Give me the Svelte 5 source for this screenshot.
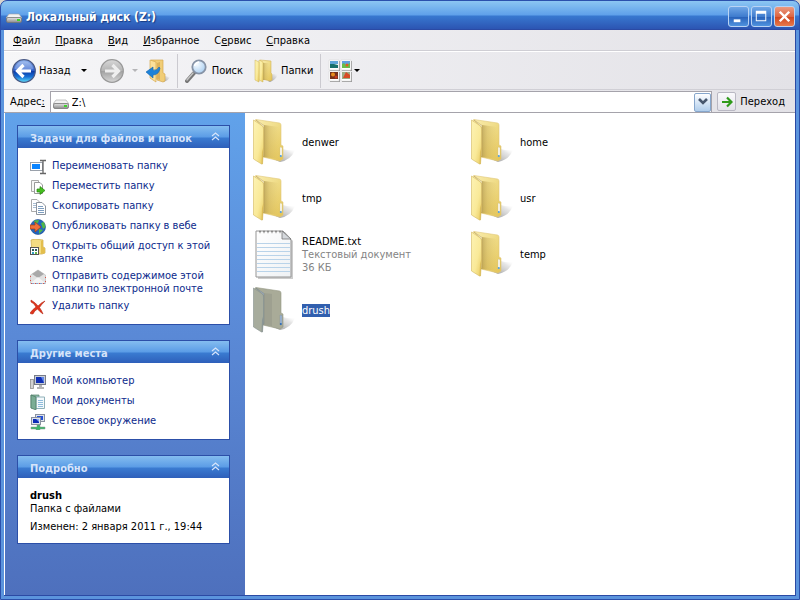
<script>
	let address = 'Z:\\';
	let selected = 'drush';
	let closed = {};

	const menu = [
		['', 'Ф', 'айл'],
		['', 'П', 'равка'],
		['', 'В', 'ид'],
		['', 'И', 'збранное'],
		['С', 'е', 'рвис'],
		['', 'С', 'правка']
	];

	const panels = [
		{
			title: 'Задачи для файлов и папок',
			links: [
				{ icon: 'rename', text: 'Переименовать папку' },
				{ icon: 'move', text: 'Переместить папку' },
				{ icon: 'copy', text: 'Скопировать папку' },
				{ icon: 'globe', text: 'Опубликовать папку в вебе' },
				{ icon: 'share', text: 'Открыть общий доступ к этой папке' },
				{ icon: 'mail', text: 'Отправить содержимое этой папки по электронной почте' },
				{ icon: 'delete', text: 'Удалить папку' }
			]
		},
		{
			title: 'Другие места',
			links: [
				{ icon: 'computer', text: 'Мой компьютер' },
				{ icon: 'documents', text: 'Мои документы' },
				{ icon: 'network', text: 'Сетевое окружение' }
			]
		},
		{ title: 'Подробно', links: [] }
	];

	const files = [
		{ name: 'denwer' },
		{ name: 'home' },
		{ name: 'tmp' },
		{ name: 'usr' },
		{ name: 'README.txt', type: 'Текстовый документ', size: '36 КБ' },
		{ name: 'temp' },
		{ name: 'drush' }
	];

	function toggle(title) {
		closed[title] = !closed[title];
	}
</script>

<!-- shared icon shapes -->
<svg class="defs" width="0" height="0" aria-hidden="true">
	<defs>
		<linearGradient id="g-back" x1="0" y1="0" x2="1" y2="1">
			<stop offset="0" stop-color="#faedaf" />
			<stop offset=".45" stop-color="#f0dd8a" />
			<stop offset="1" stop-color="#e3c355" />
		</linearGradient>
		<linearGradient id="g-flap" x1="0" y1="0" x2="1" y2="1">
			<stop offset="0" stop-color="#fdf3b4" />
			<stop offset=".6" stop-color="#f9e998" />
			<stop offset="1" stop-color="#e8ca60" />
		</linearGradient>
		<linearGradient id="g-fold" x1="0" y1="0" x2="1" y2="0">
			<stop offset="0" stop-color="#9c8136" stop-opacity=".6" />
			<stop offset=".4" stop-color="#b8983f" stop-opacity=".3" />
			<stop offset="1" stop-color="#c9ab4e" stop-opacity="0" />
		</linearGradient>
		<linearGradient id="g-shade" x1="0" y1="1" x2="1" y2="0">
			<stop offset="0" stop-color="#777" stop-opacity=".8" />
			<stop offset=".7" stop-color="#aaa" stop-opacity=".3" />
			<stop offset="1" stop-color="#fff" stop-opacity="0" />
		</linearGradient>
		<linearGradient id="g-blue" x1="0" y1="0" x2="0" y2="1">
			<stop offset="0" stop-color="#8fb2ec" />
			<stop offset=".48" stop-color="#2d5ecb" />
			<stop offset=".5" stop-color="#0c38a4" />
			<stop offset=".75" stop-color="#176fd4" />
			<stop offset="1" stop-color="#5fe0fa" />
		</linearGradient>
		<linearGradient id="g-grey" x1="0" y1="0" x2="0" y2="1">
			<stop offset="0" stop-color="#d8d8d8" />
			<stop offset=".48" stop-color="#b4b4b4" />
			<stop offset=".5" stop-color="#a0a0a0" />
			<stop offset="1" stop-color="#d6d6d6" />
		</linearGradient>
		<linearGradient id="g-drive" x1="0" y1="0" x2="0" y2="1">
			<stop offset="0" stop-color="#e4e4e4" />
			<stop offset="1" stop-color="#8b8b8b" />
		</linearGradient>
		<linearGradient id="g-paper" x1="0" y1="0" x2="1" y2="1">
			<stop offset="0" stop-color="#ffffff" />
			<stop offset="1" stop-color="#eef1f4" />
		</linearGradient>
		<radialGradient id="g-lens" cx=".35" cy=".3" r=".8">
			<stop offset="0" stop-color="#f6fbff" />
			<stop offset="1" stop-color="#a4cbf0" />
		</radialGradient>
	</defs>

	<symbol id="folder" viewBox="0 0 42 46">
		<path d="M20 40 L30 30 Q36 32 42 31 Q38 41 27 43 Z" fill="url(#g-shade)" />
		<path d="M2 1 L3 .5 L26.500 4 Q28 4.300 28 6 V26 L30 27 V40 L27 42 L10 38 Z" fill="url(#g-back)" stroke="#e0c878" stroke-width=".6" />
		<path d="M11 6 L26 8 V40 L10 38 Z" fill="url(#g-fold)" />
		<path d="M3 1 L11 6.500 V37 L10.500 37 V8 Z" fill="#fffbe2" stroke="#b89e58" stroke-width=".5" />
		<path d="M.5 1 L9.500 7 Q10.500 8 10.500 10 V30 L9.500 45 L8.500 45 L.5 40 Z" fill="url(#g-flap)" stroke="#d4b85f" stroke-width=".6" />
		<path d="M10.500 28 L9.500 45 L8.500 45 L9 33 Z" fill="#d5b045" opacity=".6" />
		<path d="M27 28 L29 28.500 V37 L27 38 Z" fill="#fff" stroke="#d3c17c" stroke-width=".5" />
		<circle cx="27.800" cy="37" r="1" fill="#4a9be0" />
	</symbol>

	<symbol id="folder-selected" viewBox="0 0 42 46">
		<path d="M20 40 L30 30 Q36 32 42 31 Q38 41 27 43 Z" fill="url(#g-shade)" />
		<path d="M2 1 L3 .5 L26.500 4 Q28 4.300 28 6 V26 L30 27 V40 L27 42 L10 38 Z" fill="#a9ab98" stroke="#959985" stroke-width=".6" />
		<path d="M11 6 L19 7 V39 L10 38 Z" fill="#83887d" opacity=".3" />
		<path d="M3 1 L11 6.500 V37 L10.500 37 V8 Z" fill="#a3b3c8" stroke="#7b8688" stroke-width=".5" />
		<path d="M.5 1 L9.500 7 Q10.500 8 10.500 10 V30 L9.500 45 L8.500 45 L.5 40 Z" fill="#a7ac9d" stroke="#84908f" stroke-width=".6" />
		<path d="M10.500 28 L9.500 45 L8.500 45 L9 33 Z" fill="#8b9695" />
		<path d="M27 28 L29 28.500 V37 L27 38 Z" fill="#9cb5d7" stroke="#84949e" stroke-width=".5" />
		<circle cx="27.800" cy="37" r="1" fill="#2a69b3" />
	</symbol>

	<symbol id="text" viewBox="0 0 42 50">
		<path d="M4 3 H32 L40 12 V50 H5 Z" fill="#aaa" opacity=".6" />
		<path d="M3 2 H30 L38 11 V48 H3 Z" fill="url(#g-paper)" stroke="#959595" />
		<path d="M4 14.500 H37 M4 18.500 H37 M4 22.500 H37 M4 26.500 H37 M4 30.500 H37 M4 34.500 H37 M4 38.500 H37 M4 42.500 H37" stroke="#b9d3e9" />
		<path d="M29 2 V10 H38 Z" fill="#d4d8dc" stroke="#777" stroke-width=".8" />
		<path d="M6 3 h2 M10 3 h2 M14 3 h2 M18 3 h2 M22 3 h2 M26 3 h2" stroke="#8a8a8a" stroke-width="2.500" />
		<path d="M6 4 h2 M10 4 h2 M14 4 h2 M18 4 h2 M22 4 h2 M26 4 h2" stroke="#fff" stroke-width="1" />
	</symbol>

	<symbol id="drive" viewBox="0 0 16 10">
		<path d="M3 1 H13 L16 5 H0 Z" fill="#f2f2f2" stroke="#a0a0a0" stroke-width=".6" />
		<rect x=".5" y="4.500" width="15" height="5" rx="1.500" fill="url(#g-drive)" stroke="#777" stroke-width=".8" />
		<rect x="11" y="6" width="3" height="2" fill="#3fd32c" />
	</symbol>

	<symbol id="back" viewBox="0 0 24 24">
		<circle cx="12" cy="12" r="11.300" fill="url(#g-blue)" stroke="#4a5a86" stroke-width="1.200" />
		<path d="M2.500 10 A9.700 9.700 0 0 1 21.500 10 Q12 13 2.500 10" fill="#fff" opacity=".25" />
		<path d="M11.500 6 L5.500 12 L11.500 18 M6 12 H19" fill="none" stroke="#fff" stroke-width="3.200" />
	</symbol>

	<symbol id="forward" viewBox="0 0 24 24">
		<circle cx="12" cy="12" r="11.300" fill="url(#g-grey)" stroke="#999" stroke-width="1.200" />
		<path d="M12.500 6 L18.500 12 L12.500 18 M18 12 H5" fill="none" stroke="#eee" stroke-width="3.200" />
	</symbol>

	<symbol id="up" viewBox="0 0 24 24">
		<path d="M17 23 L19 17 L24 18 Q22 22 17 23" fill="url(#g-shade)" />
		<path d="M5 1 L17 1 V14 L19 15 V22 L17 23 L11 21 Z" fill="#f1cd76" stroke="#d5a950" stroke-width=".7" />
		<path d="M4 1 L10 3 V17 L10 23 L4 19 Z" fill="#fbe09a" stroke="#d5a950" stroke-width=".7" />
		<path d="M11 4 L14 3 V21 L11 20 Z" fill="#bd8a36" opacity=".4" />
		<path d="M0 13 L7 8 V11 Q11 12 13 8 L14 9 Q13 16 7 16 V19 Z" fill="#1d82d8" stroke="#1264b0" stroke-width=".6" />
	</symbol>

	<symbol id="search" viewBox="0 0 24 24">
		<path d="M2 22 L9 14" stroke="#777" stroke-width="4" stroke-linecap="round" />
		<path d="M2 21 L8 14" stroke="#c4c4c4" stroke-width="1.500" stroke-linecap="round" />
		<circle cx="14" cy="8" r="6.700" fill="url(#g-lens)" stroke="#8793a6" stroke-width="1.800" />
		<path d="M9.500 7 Q10.500 3.500 14 3" fill="none" stroke="#fff" stroke-width="1.500" />
	</symbol>

	<symbol id="folders" viewBox="0 0 24 24">
		<path d="M14 22 L19 15 L24 15 Q22 21 16 23" fill="url(#g-shade)" />
		<path d="M6 1 L17 2 V14 L18 15 V21 L16 22 L8 20 Z" fill="url(#g-back)" stroke="#d3b65b" stroke-width=".6" />
		<path d="M9 4 L15 4 V21 L9 21 Z" fill="url(#g-fold)" />
		<path d="M5 1 L9 3 V17 L9 23 L5 21 Z" fill="url(#g-flap)" stroke="#cdb052" stroke-width=".5" />
		<path d="M1 1 L5 3 V17 L5 23 L1 21 Z" fill="url(#g-flap)" stroke="#cdb052" stroke-width=".5" />
	</symbol>

	<symbol id="views" viewBox="0 0 24 24">
		<path d="M2 2 h10 v10 h-10 Z M14 2 h10 v10 h-10 Z M2 13 h10 v10 h-10 Z M14 13 h10 v10 h-10 Z" fill="#9c9c9c" />
		<path d="M1 1 h10 v10 h-10 Z M13 1 h10 v10 h-10 Z M1 12 h10 v10 h-10 Z M13 12 h10 v10 h-10 Z" fill="#fff" stroke="#d0d0d0" stroke-width=".5" />
		<path d="M2 2 h8 v3 h-8 Z" fill="#5ea5d8" />
		<path d="M2 5 L6 5 L10 6 V9 H2 Z" fill="#17706c" />
		<path d="M14 2 h8 v7 h-8 Z" fill="#67bd4a" />
		<path d="M14 2 h8 v2 l-4 2 l-2 -2 l-2 1 Z" fill="#5d9fe0" />
		<circle cx="19" cy="6" r="1.500" fill="#e15a22" />
		<path d="M2 13 h8 v7 h-8 Z" fill="#75301a" />
		<circle cx="5" cy="15.500" r="2" fill="#e88b1c" />
		<circle cx="8" cy="18" r="1.500" fill="#c83a1e" />
		<path d="M14 13 h8 v7 h-8 Z" fill="#9dab83" />
		<path d="M15 19 L18 13 L22 16 V19 Z" fill="#d84a24" />
	</symbol>

	<symbol id="rename" viewBox="0 0 16 16">
		<rect x=".5" y="3.500" width="12" height="8" fill="#fff" stroke="#9aa1ab" />
		<rect x="2" y="5" width="8" height="5" fill="#0a84ff" />
		<path d="M10 1.500 H12.500 L13 2 L13.500 1.500 H16 M10 14.500 H12.500 L13 14 L13.500 14.500 H16 M13 2 V14" stroke="#666" stroke-width="1.300" fill="none" />
	</symbol>

	<symbol id="move" viewBox="0 0 16 16">
		<path d="M1.500 1.500 H8.500 V12.500 H1.500 Z" fill="#f7f7f7" stroke="#aaa" />
		<path d="M4.500 3.500 H10 L12.500 6 V14.500 H4.500 Z" fill="#fff" stroke="#999" />
		<path d="M7 10 H10 V7.500 L15 11.500 L10 15.500 V13 H7 Z" fill="#45bd1f" stroke="#26850e" stroke-width=".7" />
	</symbol>

	<symbol id="copy" viewBox="0 0 16 16">
		<path d="M1.500 .5 H7 L9.500 3 V12.500 H1.500 Z" fill="#fff" stroke="#aaa" />
		<path d="M3 4.500 H6 M3 6.500 H6 M3 8.500 H6" stroke="#a8bdd2" />
		<path d="M6.500 3.500 H12 L15.500 7 V15.500 H6.500 Z" fill="#fff" stroke="#8d949d" />
		<path d="M8 7.500 H13 M8 9.500 H14 M8 11.500 H14 M8 13.500 H14" stroke="#7d9dbf" />
	</symbol>

	<symbol id="globe" viewBox="0 0 16 16">
		<circle cx="8" cy="8" r="7.500" fill="#2465bd" stroke="#1c4b91" stroke-width=".6" />
		<path d="M4 1.500 L9 1 L8 4 L5 5 Z M11 4 L14 3 L15.500 8 L13 10 Z M9 10 L13 11 L9 15 Z" fill="#51b848" />
		<path d="M0 6 H5 V3 L11 8 L5 13 V10 H0 Z" fill="#f0723a" stroke="#a83d13" stroke-width=".7" />
	</symbol>

	<symbol id="share" viewBox="0 0 16 16">
		<path d="M1 1 L5 0 L13 1 V8 L15 9 V14 L12 15 H2 Z" fill="#f3dc82" stroke="#c8a748" stroke-width=".7" />
		<path d="M11 2 L13 1 V8 L15 9 V14 L11 15 Z" fill="#e3be4d" />
		<rect x=".5" y="8.500" width="8" height="7" fill="#fff" stroke="#555" />
		<path d="M2 10 h2 v2 h-2 Z M5 10 h2 v2 h-2 Z" fill="#2d5954" />
		<path d="M2 13 h2 v2 h-2 Z" fill="#31a2c4" />
		<path d="M5 13 h2 v2 h-2 Z" fill="#67b848" />
	</symbol>

	<symbol id="mail" viewBox="0 0 16 16">
		<path d="M8 1 L15.500 6 V14.500 H.5 V6 Z" fill="#e2e2e2" stroke="#bbb" stroke-width=".7" />
		<path d="M2 5 L8 1 L14 5 L8 9 Z" fill="#a9a9a9" />
		<path d="M1 14 L8 8 L15 14 Z" fill="#f4f4f4" />
		<path d="M.5 7 V14.500 H15.500 V7" fill="none" stroke="#d9534a" stroke-dasharray="1 3" />
		<path d="M2.500 14.500 H15" fill="none" stroke="#4a7ed0" stroke-dasharray="1 3" />
	</symbol>

	<symbol id="delete" viewBox="0 0 16 16">
		<path d="M1 1 Q6 4 8 7 Q12 3 15 2 Q11 6 9.500 8.500 Q12 12 13 15 Q10 13 7.500 10 Q4 12 3 15 Q0 15 0 14 Q3 10 6 8 Q4 4 1 3 Z" fill="#e0341c" stroke="#b52613" stroke-width=".6" />
	</symbol>

	<symbol id="computer" viewBox="0 0 16 16">
		<rect x=".5" y="5.500" width="3" height="9" fill="#d2d2d2" stroke="#8f8f8f" stroke-width=".8" />
		<rect x="4.500" y="1.500" width="11" height="9" fill="#c9ced8" stroke="#777c88" />
		<rect x="6" y="3" width="8" height="6" fill="#1230b4" />
		<path d="M11 3 H14 V9 Z" fill="#6287e8" />
		<path d="M9 11 H12 V13 H14 V15 H7 V13 H9 Z" fill="#b5b5b5" />
	</symbol>

	<symbol id="documents" viewBox="0 0 16 16">
		<path d="M1 1 H9 V14 H1 Z" fill="#8cb9a4" stroke="#54836d" stroke-width=".7" />
		<path d="M6 3 H14.500 V14.500 H6 Z" fill="#f4f9fc" stroke="#8fb0b8" />
		<path d="M8 6.500 H13 M8 8.500 H13 M8 10.500 H13 M8 12.500 H13" stroke="#8fbcdc" />
		<path d="M1 1 L6 3 V16 L1 14 Z" fill="#7bad95" stroke="#477660" stroke-width=".7" />
	</symbol>

	<symbol id="network" viewBox="0 0 16 16">
		<rect x="5.500" y=".5" width="9" height="7" fill="#dde2ec" stroke="#8890a0" />
		<rect x="7" y="2" width="6" height="4" fill="#2450d4" />
		<rect x="1.500" y="3.500" width="9" height="7" fill="#dde2ec" stroke="#8890a0" />
		<rect x="3" y="5" width="6" height="4" fill="#0c2cb6" />
		<path d="M6 5 H9 V8 Z" fill="#83a6f4" />
		<path d="M7 11 H10 V13 H15 V15 H10 V16 H6 V15 H1 V13 H7 Z" fill="#3eb56a" stroke="#8b9b91" stroke-width=".5" />
	</symbol>
</svg>

<div class="window">
	<header class="title-bar">
		<svg class="drive" aria-hidden="true"><use href="#drive" /></svg>
		<h1>Локальный диск (Z:)</h1>
		<button class="win-button" aria-label="Свернуть">
			<svg viewBox="0 0 20 20"><path d="M5 13 h7 v3 h-7 Z" fill="#fff" /></svg>
		</button>
		<button class="win-button" aria-label="Развернуть">
			<svg viewBox="0 0 20 20"><path d="M4 4 H15 V15 H4 Z M5 7 V14 H14 V7 Z" fill="#fff" fill-rule="evenodd" /></svg>
		</button>
		<button class="win-button close" aria-label="Закрыть">
			<svg viewBox="0 0 20 20"><path d="M5 5 L15 15 M15 5 L5 15" stroke="#fff" stroke-width="2.600" /></svg>
		</button>
	</header>

	<div class="client">
		<nav class="menu-bar">
			{#each menu as [before, key, after]}
				<button>{before}<u>{key}</u>{after}</button>
			{/each}
		</nav>

		<div class="toolbar">
			<button class="tool back"><svg aria-hidden="true"><use href="#back" /></svg>Назад</button>
			<button class="arrow" aria-label="История назад"></button>
			<button class="tool forward" aria-label="Вперед" disabled><svg aria-hidden="true"><use href="#forward" /></svg></button>
			<button class="arrow" aria-label="История вперед" disabled></button>
			<button class="tool up" aria-label="Вверх"><svg aria-hidden="true"><use href="#up" /></svg></button>
			<span class="separator"></span>
			<button class="tool"><svg aria-hidden="true"><use href="#search" /></svg>Поиск</button>
			<button class="tool folders"><svg aria-hidden="true"><use href="#folders" /></svg>Папки</button>
			<span class="separator"></span>
			<button class="tool views" aria-label="Вид"><svg aria-hidden="true"><use href="#views" /></svg><i></i></button>
		</div>

		<div class="address-bar">
			<label for="address">Адрес<u>:</u></label>
			<div class="field">
				<svg class="drive" aria-hidden="true"><use href="#drive" /></svg>
				<input id="address" type="text" bind:value={address} />
				<button class="drop" aria-label="Показать список">
					<svg viewBox="0 0 10 8"><path d="M1 1 L5 5 L9 1" fill="none" stroke="#47576e" stroke-width="2.600" /></svg>
				</button>
			</div>
			<button class="go">
				<span><svg viewBox="0 0 12 12"><path d="M1 6 H10 M6 1.500 L10.500 6 L6 10.500" fill="none" stroke="#2f9a1b" stroke-width="2.200" /></svg></span>
				Переход
			</button>
		</div>

		<div class="content">
			<aside>
				{#each panels as panel}
					<section class="panel">
						<button class="panel-head" on:click={() => toggle(panel.title)}>
							{panel.title}
							<svg viewBox="0 0 9 9"><path d="M1 4 L4.500 1 L8 4 M1 8 L4.500 5 L8 8" fill="none" stroke="#d6e4fa" stroke-width="1.200" /></svg>
						</button>
						{#if !closed[panel.title]}
							{#if panel.links.length}
								<ul>
									{#each panel.links as link}
										<li>
											<a href="#{link.icon}">
												<svg aria-hidden="true"><use href="#{link.icon}" /></svg>
												<span>{link.text}</span>
											</a>
										</li>
									{/each}
								</ul>
							{:else}
								<div class="details">
									<strong>{selected}</strong>
									<p>Папка с файлами</p>
									<p class="changed">Изменен: 2 января 2011 г., 19:44</p>
								</div>
							{/if}
						{/if}
					</section>
				{/each}
			</aside>

			<main>
				{#each files as file}
					<button class="file" class:selected={file.name === selected} on:click={() => (selected = file.name)}>
						{#if file.type}
							<svg class="page" aria-hidden="true"><use href="#text" /></svg>
						{:else}
							<svg aria-hidden="true"><use href={file.name === selected ? '#folder-selected' : '#folder'} /></svg>
						{/if}
						<span class="info">
							<span class="name">{file.name}</span>
							{#if file.type}
								<span class="meta">{file.type}</span>
								<span class="meta">{file.size}</span>
							{/if}
						</span>
					</button>
				{/each}
			</main>
		</div>
	</div>
</div>

<style>
	:global(body) {
		background: #d8d4cc;
	}

	.defs {
		position: absolute;
	}

	.window {
		display: flex;
		flex-direction: column;
		box-sizing: border-box;
		min-height: 100vh;
		padding: 0 3px 3px;
		border: 1px solid #2b50ac;
		border-radius: 7px 7px 0 0;
		background: linear-gradient(#8cc6f2, #5fa0ea 14px, #3878d0 15px, #2b52b0 29px, transparent 29px), #5b94dd;
		font-family: "DejaVu Sans Condensed", Tahoma, "DejaVu Sans", sans-serif;
		font-size: 11px;
		line-height: 13px;
		color: #000;
	}

	button {
		padding: 0;
		border: 0;
		background: none;
		font: inherit;
		color: inherit;
		text-align: left;
	}

	svg {
		display: block;
		flex: none;
	}

	.title-bar {
		display: flex;
		align-items: center;
		gap: 2px;
		box-sizing: border-box;
		height: 28px;
		padding: 2px 1px 0 2px;
	}

	.drive {
		width: 16px;
		height: 10px;
	}

	.title-bar .drive {
		margin-top: 4px;
	}

	h1 {
		flex: 1;
		margin: 2px 0 0 2px;
		font-size: 12px;
		line-height: 16px;
		font-weight: bold;
		color: #fff;
		text-shadow: 1px 1px 1px #183a82;
	}

	.win-button {
		box-sizing: border-box;
		width: 21px;
		height: 21px;
		border: 1px solid #b9d3f4;
		border-radius: 3px;
		background: linear-gradient(#6fa6e6, #3f7cce 50%, #2860b8 51%, #4f93df);
	}

	.win-button svg {
		width: 19px;
		height: 19px;
	}

	.close {
		background: linear-gradient(#eb9a80, #dc6543 50%, #ce431c 51%, #e87a4c);
	}

	.client {
		display: flex;
		flex-direction: column;
		flex: 1;
		border: 1px solid #2b4aa4;
		border-left: 0;
		background: #fff;
	}

	.menu-bar,
	.toolbar,
	.address-bar {
		display: flex;
		align-items: center;
		box-sizing: border-box;
		background: linear-gradient(90deg, #f6f6f8, #e3e2e7);
	}

	.menu-bar {
		gap: 15px;
		height: 21px;
		padding-left: 9px;
		border-bottom: 1px solid #cfced4;
	}

	.toolbar {
		height: 39px;
		padding-left: 8px;
		border-top: 1px solid #fff;
		border-bottom: 1px solid #d0cfd5;
	}

	.tool {
		display: flex;
		align-items: center;
		gap: 3px;
	}

	.tool svg {
		width: 24px;
		height: 24px;
	}

	.arrow,
	.views i {
		width: 0;
		height: 0;
		border: 3px solid transparent;
		border-top-color: #000;
		border-bottom: 0;
	}

	.arrow {
		margin: 0 13px 0 10px;
	}

	.arrow:disabled {
		margin: 0 8px;
		border-top-color: #b5b5b8;
	}

	.separator {
		width: 1px;
		height: 34px;
		margin: 0 7px;
		background: #cbcad0;
	}

	.folders {
		margin-left: 11px;
	}

	.views {
		gap: 2px;
	}

	.address-bar {
		gap: 5px;
		height: 23px;
		padding: 1px 0 0 6px;
		border-bottom: 1px solid #a5a3ab;
	}

	.field {
		display: flex;
		align-items: center;
		flex: 1;
		height: 20px;
		border: 1px solid #a5a3ab;
		border-bottom: 0;
		background: #fff;
	}

	.field .drive {
		margin: 4px 0 0 2px;
	}

	input {
		flex: 1;
		min-width: 0;
		padding: 0 3px;
		border: 0;
		outline: 0;
		background: none;
		font: inherit;
		color: inherit;
	}

	.drop {
		display: flex;
		align-items: center;
		justify-content: center;
		box-sizing: border-box;
		width: 17px;
		height: 19px;
		border: 1px solid #86a6cc;
		border-radius: 2px;
		background: linear-gradient(#fff, #d7e6f6 50%, #b0cdeb);
	}

	.drop svg {
		width: 10px;
		height: 8px;
	}

	.go {
		display: flex;
		align-items: center;
		gap: 4px;
		padding-right: 10px;
	}

	.go span {
		display: flex;
		align-items: center;
		justify-content: center;
		box-sizing: border-box;
		width: 19px;
		height: 19px;
		border: 1px solid #b9b8c3;
		border-radius: 2px;
		background: linear-gradient(#fafafc, #e3e2ea);
	}

	.go svg {
		width: 12px;
		height: 12px;
	}

	.content {
		display: flex;
		flex: 1;
	}

	aside {
		display: flex;
		flex-direction: column;
		gap: 15px;
		box-sizing: border-box;
		flex: none;
		width: 241px;
		padding: 12px 15px 12px 12px;
		border-left: 1px solid #fff;
		background: linear-gradient(#61a2ea, #5b8bd8 42%, #4e70bd);
	}

	.panel {
		border: 1px solid #2c4fa8;
		background: #fff;
	}

	.panel-head {
		display: flex;
		align-items: center;
		justify-content: space-between;
		width: 100%;
		height: 22px;
		padding: 2px 9px 0 12px;
		background: linear-gradient(#84bdf0, #5b9ce6 11px, #3a7bd1 12px, #2e5fba);
		font-weight: bold;
		color: #d6e4fa;
	}

	.panel-head svg {
		width: 9px;
		height: 9px;
		margin-bottom: 4px;
	}

	ul {
		display: flex;
		flex-direction: column;
		gap: 4px;
		margin: 0;
		padding: 11px 12px 9px;
		list-style: none;
	}

	a {
		display: flex;
		gap: 6px;
		min-height: 16px;
		color: #0c2a8c;
		text-decoration: none;
	}

	a svg {
		width: 16px;
		height: 16px;
	}

	a:hover span {
		text-decoration: underline;
	}

	.details {
		padding: 11px 12px 10px;
	}

	.details strong {
		display: block;
	}

	p {
		margin: 0;
	}

	.changed {
		margin-top: 5px;
	}

	main {
		display: grid;
		grid-template-columns: repeat(auto-fill, 218px);
		grid-auto-rows: 56px;
		align-content: start;
		flex: 1;
		padding: 1px 0 0 8px;
	}

	.file {
		display: flex;
		align-items: center;
		gap: 7px;
	}

	.file svg {
		width: 42px;
		height: 46px;
	}

	.file .page {
		height: 50px;
	}

	.info {
		display: flex;
		flex-direction: column;
		align-items: flex-start;
	}

	.meta {
		color: #848484;
	}

	.selected .name {
		background: #315fae;
		color: #fff;
	}
</style>
